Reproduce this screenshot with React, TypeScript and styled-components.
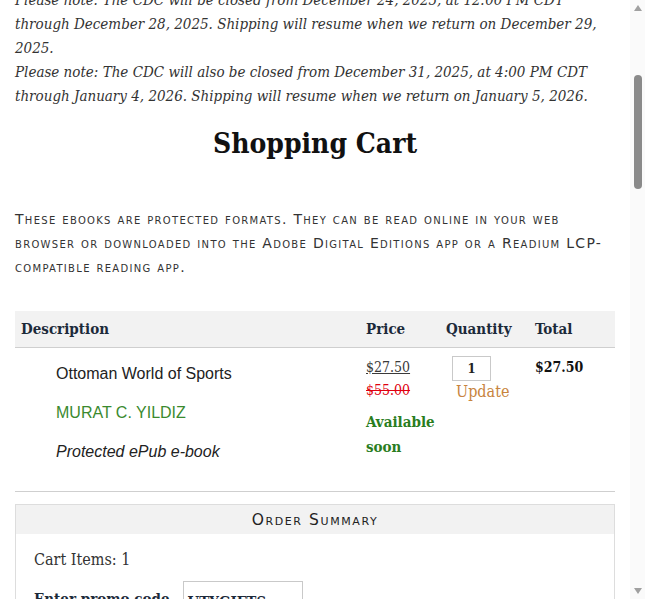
import React, { useLayoutEffect, useRef } from "react";
import styled, { createGlobalStyle } from "styled-components";

const Global = createGlobalStyle`
  html, body { margin: 0; padding: 0; background: #fff; }
  html { scrollbar-width: none; }
  body { font-family: "DejaVu Serif Condensed", "DejaVu Serif", serif; color: #222; }
`;

const Page = styled.div`
  width: 600px;
  margin: 0 15px;
`;

const SiteHeader = styled.header`
  height: 240px;
  display: flex;
  flex-direction: column;
  justify-content: center;
  align-items: center;
  gap: 16px;
  border-bottom: 1px solid #ddd;
  margin-bottom: 16px;
`;

const SiteTitle = styled.div`
  font-size: 28px;
  font-weight: bold;
  color: #333;
`;

const Nav = styled.nav`
  display: flex;
  gap: 18px;
  font-family: "Liberation Sans", sans-serif;
  font-size: 14px;
  color: #bf5700;
`;

const Notice = styled.div`
  font-style: italic;
  font-size: 15px;
  line-height: 24px;
  color: #333;
  margin-bottom: 16px;
  p { margin: 0; }
`;

const Title = styled.h1`
  margin: 0 0 43px;
  text-align: center;
  font-size: 28px;
  line-height: 40px;
  font-weight: bold;
  color: #111;
`;

const Caps = styled.p`
  margin: 0 0 32px;
  font-family: "DejaVu Sans", sans-serif;
  font-variant: small-caps;
  font-size: 14px;
  letter-spacing: 1.3px;
  line-height: 24px;
  color: #333;
`;

const Table = styled.div`
  display: grid;
  grid-template-columns: 345px 80px 89px 86px;
`;

const HeadCell = styled.div`
  background: #f2f2f2;
  border-bottom: 1px solid #cfcfcf;
  height: 36px;
  display: flex;
  align-items: center;
  padding-left: 6px;
  font-size: 15px;
  font-weight: bold;
  color: #1c2a3a;
`;

const Cell = styled.div<{ $pad?: number }>`
  padding: 8px 0 0 ${(p) => p.$pad ?? 6}px;
  display: flex;
  flex-direction: column;
  align-items: flex-start;
`;

const DescLine = styled.div<{ $color?: string; $italic?: boolean }>`
  font-family: "Liberation Sans", Arial, sans-serif;
  font-size: 16px;
  line-height: 39px;
  color: ${(p) => p.$color ?? "#222"};
  font-style: ${(p) => (p.$italic ? "italic" : "normal")};
  &:first-child { margin-top: -2px; }
`;

const Price = styled.span`
  font-size: 14px;
  line-height: 22px;
  color: #3a3a3a;
  text-decoration: underline;
`;

const OldPrice = styled.s`
  font-size: 14px;
  line-height: 24px;
  color: #e00010;
`;

const Avail = styled.div`
  margin-top: 8px;
  font-size: 15px;
  font-weight: bold;
  line-height: 25px;
  color: #2a7d1e;
`;

const QtyInput = styled.input`
  box-sizing: border-box;
  width: 39px;
  height: 25px;
  margin-left: 6px;
  border: 1px solid #c9c9c9;
  text-align: center;
  font-family: "DejaVu Serif Condensed", "DejaVu Serif", serif;
  font-weight: bold;
  font-size: 13px;
  color: #222;
  padding: 0;
`;

const Update = styled.span`
  font-size: 16px;
  line-height: 22px;
  color: #c8843e;
  margin-left: 10px;
`;

const Total = styled.div`
  font-family: "DejaVu Serif Condensed", "DejaVu Serif", serif;
  font-size: 14px;
  font-weight: bold;
  line-height: 22px;
  color: #111;
`;

const Rule = styled.hr`
  margin: 20px 0 12px;
  border: 0;
  border-top: 1px solid #cfcfcf;
`;

const Summary = styled.section`
  border: 1px solid #dddddd;
  margin-bottom: 40px;
`;

const SummaryHead = styled.div`
  background: #f2f2f2;
  height: 29px;
  display: flex;
  align-items: center;
  justify-content: center;
  font-family: "DejaVu Sans", sans-serif;
  font-variant: small-caps;
  font-size: 15.5px;
  letter-spacing: 1.6px;
  color: #222;
`;

const SummaryBody = styled.div`
  padding: 11px 18px 24px;
  display: flex;
  flex-direction: column;
  gap: 6px;
`;

const SumLine = styled.div`
  font-size: 16px;
  line-height: 30px;
  color: #333;
`;

const PromoRow = styled.div`
  display: flex;
  align-items: flex-start;
  gap: 14px;
  font-size: 15px;
  font-weight: bold;
  color: #1c2a3a;
`;

const PromoLabel = styled.label`
  padding-top: 8px;
  line-height: 20px;
`;

const PromoInput = styled.input`
  box-sizing: border-box;
  width: 120px;
  height: 34px;
  border: 1px solid #c9c9c9;
  padding: 8px 3px 0;
  font-family: "DejaVu Serif Condensed", "DejaVu Serif", serif;
  font-size: 15px;
  font-weight: bold;
  color: #1c2a3a;
`;

const Checkout = styled.button`
  align-self: flex-start;
  background: #bf5700;
  color: #fff;
  border: 0;
  padding: 10px 24px;
  font-size: 16px;
  font-family: "DejaVu Serif Condensed", "DejaVu Serif", serif;
`;

const Footer = styled.footer`
  min-height: 1880px;
  border-top: 1px solid #ddd;
  padding-top: 24px;
  font-family: "Liberation Sans", sans-serif;
  font-size: 13px;
  color: #666;
`;

/* Browser-style scrollbar overlay (the picture shows the window's scrollbar) */
const ScrollTrack = styled.div`
  position: fixed;
  top: 0;
  right: 0;
  bottom: 0;
  width: 15px;
  background: #fafafa;
  display: flex;
  flex-direction: column;
  align-items: center;
  justify-content: space-between;
  padding: 5px 0;
  box-sizing: border-box;
`;

const ScrollThumb = styled.div`
  position: absolute;
  top: 75px;
  left: 4px;
  width: 8px;
  height: 114px;
  border-radius: 4px;
  background: #8a8a8a;
`;

export default function App() {
  const noticeRef = useRef<HTMLDivElement>(null);
  useLayoutEffect(() => {
    const el = noticeRef.current;
    if (!el) return;
    const top = el.getBoundingClientRect().top + window.scrollY;
    const go = () => window.scrollTo(0, top + 12);
    go();
    requestAnimationFrame(go);
  }, []);

  return (
    <>
      <Global />
      <Page>
        <SiteHeader>
          <SiteTitle>University of Texas Press</SiteTitle>
          <Nav>
            <span>Books</span>
            <span>Journals</span>
            <span>Authors</span>
            <span>About</span>
          </Nav>
        </SiteHeader>
        <Notice ref={noticeRef}>
          <p>
            Please note: The CDC will be closed from December 24, 2025, at 12:00 PM CDT through December 28,
            2025. Shipping will resume when we return on December 29, 2025.
          </p>
          <p>
            Please note: The CDC will also be closed from December 31, 2025, at 4:00 PM CDT through January 4,
            2026. Shipping will resume when we return on January 5, 2026.
          </p>
        </Notice>
        <Title>Shopping Cart</Title>
        <Caps>
          These ebooks are protected formats. They can be read online in your web browser or downloaded into the
          Adobe Digital Editions app or a Readium LCP-compatible reading app.
        </Caps>
        <Table>
          <HeadCell>Description</HeadCell>
          <HeadCell>Price</HeadCell>
          <HeadCell>Quantity</HeadCell>
          <HeadCell>Total</HeadCell>
          <Cell $pad={41}>
            <DescLine>Ottoman World of Sports</DescLine>
            <DescLine $color="#3a8a2e">MURAT C. YILDIZ</DescLine>
            <DescLine $italic>Protected ePub e-book</DescLine>
          </Cell>
          <Cell>
            <Price>$27.50</Price>
            <OldPrice>$55.00</OldPrice>
            <Avail>
              Available
              <br />
              soon
            </Avail>
          </Cell>
          <Cell $pad={6}>
            <QtyInput defaultValue="1" />
            <Update>Update</Update>
          </Cell>
          <Cell>
            <Total>$27.50</Total>
          </Cell>
        </Table>
        <Rule />
        <Summary>
          <SummaryHead>Order Summary</SummaryHead>
          <SummaryBody>
            <SumLine>Cart Items: 1</SumLine>
            <PromoRow>
              <PromoLabel>Enter promo code</PromoLabel>
              <PromoInput defaultValue="UTYGIFTS" />
            </PromoRow>
            <SumLine>Subtotal: $27.50</SumLine>
            <Checkout>Proceed to Checkout</Checkout>
          </SummaryBody>
        </Summary>
        <Footer>© University of Texas Press</Footer>
      </Page>
      <ScrollTrack>
        <svg width="8" height="6" viewBox="0 0 8 6">
          <path d="M4 0 L8 6 L0 6 Z" fill="#a0a0a0" />
        </svg>
        <ScrollThumb />
        <svg width="8" height="6" viewBox="0 0 8 6">
          <path d="M0 0 L8 0 L4 6 Z" fill="#a0a0a0" />
        </svg>
      </ScrollTrack>
    </>
  );
}
